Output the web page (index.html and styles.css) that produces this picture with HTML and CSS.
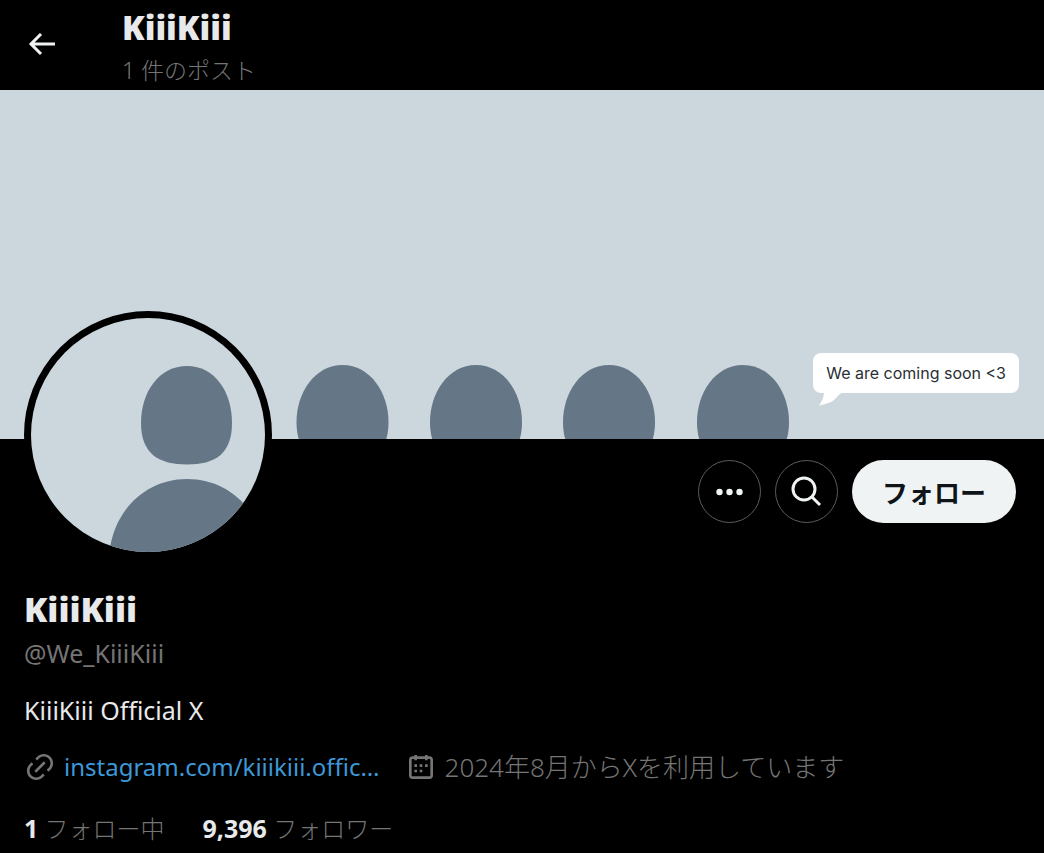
FILE: index.html
```html
<!DOCTYPE html>
<html lang="ja">
<head>
    <meta charset="UTF-8">
    <meta name="viewport" content="width=device-width, initial-scale=1.0">
    <title>KiiiKiii</title>
    <link rel="stylesheet" href="styles.css">
</head>
<body>
    <header class="topbar">
        <button class="back" type="button" aria-label="戻る">
            <svg width="28" height="24" viewBox="0 0 28 24" fill="none" stroke="currentColor" stroke-width="3">
                <path d="M27 11H4M13 1L3 11l10 10"/>
            </svg>
        </button>
        <div class="topbar-text">
            <h2 class="title">KiiiKiii</h2>
            <div class="post-count">1 件のポスト</div>
        </div>
    </header>

    <main>
        <div class="banner">
            <svg class="banner-art" viewBox="0 0 1044 349" fill="#657786">
                <defs>
                    <path id="head" d="M0 0C28 0 46 28 46 57C46 85 32 99 0 99S-46 85-46 57C-46 28-28 0 0 0Z"/>
                </defs>
                <use href="#head" x="342.500" y="275"/>
                <use href="#head" x="476" y="275"/>
                <use href="#head" x="609" y="275"/>
                <use href="#head" x="743" y="275"/>
            </svg>
            <div class="bubble">
                We are coming soon &lt;3
                <svg class="bubble-tail" width="24" height="14" viewBox="0 0 24 14" fill="#fff">
                    <path d="M5 0C5 5 3 9 0 13.500C7 12 14 10 16 7Q20 2 24 0Z"/>
                </svg>
            </div>
        </div>

        <section class="profile">
            <div class="profile-top">
                <a class="avatar" href="#" aria-label="KiiiKiii">
                    <svg viewBox="0 0 234 234" fill="#657786">
                        <path d="M156 48C184 48 201 74 201 105C201 136 184 146.500 156 146.500S110 136 110 105C110 74 128 48 156 48Z"/>
                        <path d="M78 240C80 196 112 161 156 161C201 161 232 196 234 240Z"/>
                    </svg>
                </a>
                <div class="actions">
                    <button class="icon-button" type="button" aria-label="もっと見る">
                        <svg width="28" height="8" viewBox="0 0 28 8" fill="currentColor">
                            <circle cx="3.500" cy="4" r="3.200"/>
                            <circle cx="13.500" cy="4" r="3.200"/>
                            <circle cx="23.500" cy="4" r="3.200"/>
                        </svg>
                    </button>
                    <button class="icon-button" type="button" aria-label="検索">
                        <svg width="32" height="32" viewBox="0 0 32 32" fill="none" stroke="currentColor" stroke-width="3">
                            <circle cx="13" cy="13" r="11"/>
                            <path d="M21 21l8 8"/>
                        </svg>
                    </button>
                    <button class="follow" type="button">フォロー</button>
                </div>
            </div>

            <h1 class="name">KiiiKiii</h1>
            <div class="handle">@We_KiiiKiii</div>
            <p class="bio">KiiiKiii Official X</p>

            <div class="meta">
                <span class="meta-item">
                    <svg width="32" height="32" viewBox="0 0 24 24" fill="currentColor">
                        <path d="M18.360 5.640c-1.950-1.960-5.110-1.960-7.070 0L9.880 7.050 8.460 5.640l1.420-1.420c2.730-2.730 7.160-2.730 9.900 0 2.730 2.740 2.730 7.170 0 9.900l-1.420 1.420-1.410-1.420 1.410-1.410c1.960-1.960 1.960-5.120 0-7.070zm-2.120 3.530l-7.070 7.070-1.410-1.410 7.070-7.070 1.410 1.410zm-12.020.71l1.420-1.420 1.410 1.420-1.410 1.410c-1.960 1.960-1.960 5.120 0 7.070 1.950 1.960 5.110 1.960 7.070 0l1.410-1.410 1.420 1.410-1.420 1.420c-2.730 2.730-7.160 2.730-9.900 0-2.730-2.740-2.730-7.170 0-9.900z"/>
                    </svg>
                    <a class="site" href="#">instagram.com/kiiikiii.offic…</a>
                </span>
                <span class="meta-item">
                    <svg width="32" height="32" viewBox="0 0 24 24" fill="currentColor">
                        <path d="M7 4V3h2v1h6V3h2v1h1.500C19.890 4 21 5.120 21 6.500v12c0 1.380-1.110 2.500-2.500 2.500h-13C4.120 21 3 19.880 3 18.500v-12C3 5.120 4.120 4 5.500 4H7zm0 2H5.500c-.27 0-.5.220-.5.500v12c0 .280.230.500.500.500h13c.280 0 .500-.220.500-.500v-12c0-.280-.220-.500-.500-.500H17v1h-2V6H9v1H7V6zm0 6h2v-2H7v2zm0 4h2v-2H7v2zm4-4h2v-2h-2v2zm0 4h2v-2h-2v2zm4-4h2v-2h-2v2z"/>
                    </svg>
                    <span class="joined">2024年8月からXを利用しています</span>
                </span>
            </div>

            <div class="stats">
                <a href="#"><strong>1</strong> フォロー中</a>
                <a href="#"><strong>9,396</strong> フォロワー</a>
            </div>
        </section>
    </main>
</body>
</html>
```
FILE: styles.css
```css
* {
    box-sizing: border-box;
}
body {
    margin: 0;
    background: #000;
    color: #e7e9ea;
    font-family: "Noto Sans", "Noto Sans CJK JP", sans-serif;
    font-size: 25px;
    line-height: 32px;
}
h1, h2, p {
    margin: 0;
}
a {
    color: inherit;
    text-decoration: none;
}
button {
    padding: 0;
    border: none;
    background: none;
    color: #eff3f4;
    font-family: inherit;
    cursor: pointer;
}
svg {
    display: block;
    flex-shrink: 0;
}
.topbar {
    display: flex;
    align-items: center;
    gap: 66px;
    height: 90px;
    padding: 0 28px;
}
.topbar-text {
    padding-top: 6px;
}
.title, .name {
    font-size: 34px;
    font-weight: 900;
    line-height: 44px;
}
.title {
    font-size: 33px;
}
.post-count {
    color: #757575;
    font-size: 23px;
    font-weight: 300;
    line-height: 40px;
}
.banner {
    position: relative;
    background: #ccd7dd;
}
.banner-art {
    width: 100%;
}
.bubble {
    position: absolute;
    right: 25px;
    bottom: 46px;
    padding: 0 13px;
    border-radius: 8px;
    background: #fff;
    color: #292f33;
    font-family: Inter, sans-serif;
    font-size: 16px;
    line-height: 40px;
}
.bubble-tail {
    position: absolute;
    left: 6px;
    top: 39px;
}
.profile {
    padding: 0 28px 8px 24px;
}
.profile-top {
    display: flex;
    justify-content: space-between;
    align-items: flex-start;
}
.avatar {
    position: relative;
    width: 248px;
    margin-top: -128px;
    border: 7px solid #000;
    border-radius: 50%;
    background: #000;
}
.avatar svg {
    width: 100%;
    border-radius: 50%;
    background: #ccd7dd;
}
.actions {
    display: flex;
    gap: 14px;
    padding-top: 21px;
}
.icon-button {
    display: flex;
    align-items: center;
    justify-content: center;
    width: 63px;
    height: 63px;
    border: 1px solid #5c5c5c;
    border-radius: 50%;
}
.follow {
    width: 164px;
    height: 63px;
    border-radius: 32px;
    background: #eff3f4;
    color: #0f1419;
    font-size: 26px;
    font-weight: 700;
}
.name {
    margin-top: 28px;
}
.handle {
    margin-top: 6px;
    color: #757575;
}
.bio {
    margin-top: 25px;
}
.meta {
    display: flex;
    flex-wrap: wrap;
    gap: 0 25px;
    margin-top: 25px;
    color: #757575;
}
.meta-item {
    display: flex;
    align-items: center;
    gap: 8px;
}
.site {
    color: #3d98d8;
    font-size: 24px;
}
.joined {
    font-size: 26px;
    font-weight: 300;
}
.stats {
    display: flex;
    gap: 38px;
    margin-top: 29px;
    color: #757575;
    font-size: 24px;
    font-weight: 300;
}
.stats strong {
    color: #e7e9ea;
    font-size: 25px;
    font-weight: 700;
}
```
